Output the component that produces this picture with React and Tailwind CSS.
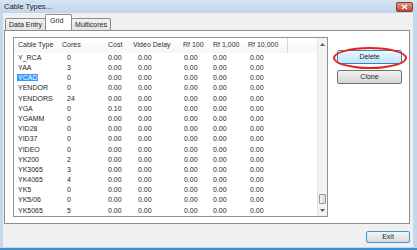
import React from 'react'

const rows = [
  ['Y_RCA', '0', '0.00'],
  ['YAA', '3', '0.00'],
  ['YCAD', '0', '0.00'],
  ['YENDOR', '0', '0.00'],
  ['YENDORS', '24', '0.00'],
  ['YGA', '0', '0.10'],
  ['YGAMM', '0', '0.00'],
  ['YID28', '0', '0.00'],
  ['YID37', '0', '0.00'],
  ['YIDEO', '0', '0.00'],
  ['YK200', '2', '0.00'],
  ['YK3065', '3', '0.00'],
  ['YK4065', '4', '0.00'],
  ['YK5', '0', '0.00'],
  ['YK5/06', '0', '0.00'],
  ['YK5065', '5', '0.00'],
]

// column widths and text insets (header / data)
const cols = [
  { name: 'Cable Type', w: 'w-[44px]', h: 'pl-[4px]', d: 'pl-[4px]' },
  { name: 'Cores', w: 'w-[46px]', h: 'pl-[4px]', d: 'pl-[9px]' },
  { name: 'Cost', w: 'w-[26px]', h: 'pl-[4px]', d: 'pl-[4px]' },
  { name: 'Video Delay', w: 'w-[49px]', h: 'pl-[3px]', d: 'pl-[8px]' },
  { name: 'Rf 100', w: 'w-[30px]', h: 'pl-[4px]', d: 'pl-[5px]' },
  { name: 'Rf 1,000', w: 'w-[36px]', h: 'pl-[4px]', d: 'pl-[4px]' },
  { name: 'Rf 10,000', w: 'w-[43px]', h: 'pl-[3px]', d: 'pl-[5px]' },
]

function Tab({ label, active }) {
  if (active) {
    return (
      <div className="relative z-10 -mx-[1px] h-[16px] w-[27px] border border-b-0 border-[#898c95] bg-white rounded-t-[2px] pl-[4px] pt-[1px] text-[7px] text-[#1e1e1e]">
        {label}
      </div>
    )
  }
  return (
    <div className="mt-[3px] h-[12px] border border-b-0 border-[#898c95] bg-linear-to-b from-[#f2f2f2] to-[#e3e3e3] rounded-t-[2px] px-[3px] pt-[1px] text-[7px] leading-[9px] text-[#1e1e1e]">
      {label}
    </div>
  )
}

function Button({ label, tone }) {
  const look =
    tone === 'hot'
      ? 'border-[#3c7fb1] from-[#eaf6fd] to-[#bee6fd]'
      : 'border-[#707070] from-[#f2f2f2] to-[#d4d4d4]'
  return (
    <div className={`flex h-[14px] items-center justify-center rounded-[2px] border bg-linear-to-b ${look} text-[7px] text-[#1e1e1e]`}>
      {label}
    </div>
  )
}

function Grid() {
  return (
    <div className="flex h-[180px] w-[315px] border border-[#8f9296] bg-white">
      <div className="flex w-[303px] flex-col">
        <div className="flex h-[15px] items-center bg-linear-to-b from-white to-[#f5f6f7] text-[7px] text-[#2e2e2e]">
          {cols.map((c, i) => (
            <div key={c.name} className={`${c.w} ${c.h} ${i === 6 ? 'border-r border-[#d5d5d5] h-full flex items-center' : ''}`}>
              {c.name}
            </div>
          ))}
        </div>
        {rows.map((r, i) => (
          <div key={r[0]} className="flex h-[10.2px] items-center text-[7px] text-[#262626]">
            <div className={`${cols[0].w} ${cols[0].d}`}>
              <span className={i === 2 ? 'bg-[#3399ff] px-[1px] -mx-[1px] text-white' : ''}>{r[0]}</span>
            </div>
            <div className={`${cols[1].w} ${cols[1].d}`}>{r[1]}</div>
            <div className={`${cols[2].w} ${cols[2].d}`}>{r[2]}</div>
            <div className={`${cols[3].w} ${cols[3].d}`}>0.00</div>
            <div className={`${cols[4].w} ${cols[4].d}`}>0.00</div>
            <div className={`${cols[5].w} ${cols[5].d}`}>0.00</div>
            <div className={`${cols[6].w} ${cols[6].d}`}>0.00</div>
          </div>
        ))}
      </div>
      {/* vertical scrollbar */}
      <div className="flex w-[10px] flex-col border-l border-[#e3e3e3] bg-[#f3f3f3]">
        <div className="flex h-[12px] items-center justify-center">
          <svg width="5" height="3" viewBox="0 0 5 3"><path d="M0 3 L2.5 0 L5 3 Z" fill="#606060" /></svg>
        </div>
        <div className="flex-1" />
        <div className="mx-[1px] h-[10px] rounded-[1px] border border-[#979797] bg-linear-to-r from-[#f1f1f1] to-[#d8d8d8]" />
        <div className="flex h-[12px] items-center justify-center">
          <svg width="5" height="3" viewBox="0 0 5 3"><path d="M0 0 L2.5 3 L5 0 Z" fill="#606060" /></svg>
        </div>
      </div>
    </div>
  )
}

export default function App() {
  return (
    <div
      className="flex h-[250px] w-[417px] flex-col overflow-hidden bg-[#c4d7ed]"
      style={{ fontFamily: '"Liberation Sans", Arial, sans-serif' }}
    >
      {/* title bar */}
      <div className="relative flex h-[13px] items-center bg-linear-to-b from-[#d6e4f3] to-[#c2d5eb] pl-[4px] text-[7.5px] text-[#1e1e1e]">
        Cable Types...
        <div className="absolute right-[4px] top-[2px] flex h-[10px] w-[17px] items-center justify-center rounded-[2px] border border-[#8a3a2e] bg-linear-to-b from-[#e59a8a] to-[#c4412c]">
          <svg width="7" height="6" viewBox="0 0 7 6">
            <path d="M1 1 L6 5 M6 1 L1 5" stroke="white" strokeWidth="1.6" />
          </svg>
        </div>
      </div>

      {/* client area */}
      <div className="ml-[3px] mr-[4px] flex flex-1 flex-col bg-[#f0f0f0] pl-[1px] pr-[3px] pt-[2px]">
        <div className="flex h-[15px] items-end pl-[1px]">
          <Tab label="Data Entry" />
          <Tab label="Grid" active />
          <Tab label="Multicores" />
        </div>
        <div className="relative flex h-[194px] gap-[9px] border border-[#898c95] bg-white pl-[8px] pt-[6px]">
          <Grid />
          <div className="flex w-[65px] flex-col gap-[6px] pt-[13px]">
            <Button label="Delete" tone="hot" />
            <Button label="Clone" />
          </div>
          {/* red highlight around Delete */}
          <div className="absolute left-[328px] top-[16px] h-[22px] w-[74px] rounded-[50%] border-2 border-[#e3231b]" />
        </div>
        <div className="mt-[7px] flex justify-end">
          <div className="w-[44px]">
            <div className="flex h-[12px] items-center justify-center rounded-[2px] border border-[#3399dd] bg-linear-to-b from-[#f4f4f4] to-[#dcdcdc] text-[7px] text-[#1e1e1e]">
              Exit
            </div>
          </div>
        </div>
      </div>
      <div className="h-[1px] bg-[#c4d7ed]" />
      <div className="h-[2px] bg-[#3b8fcf]" />
    </div>
  )
}
